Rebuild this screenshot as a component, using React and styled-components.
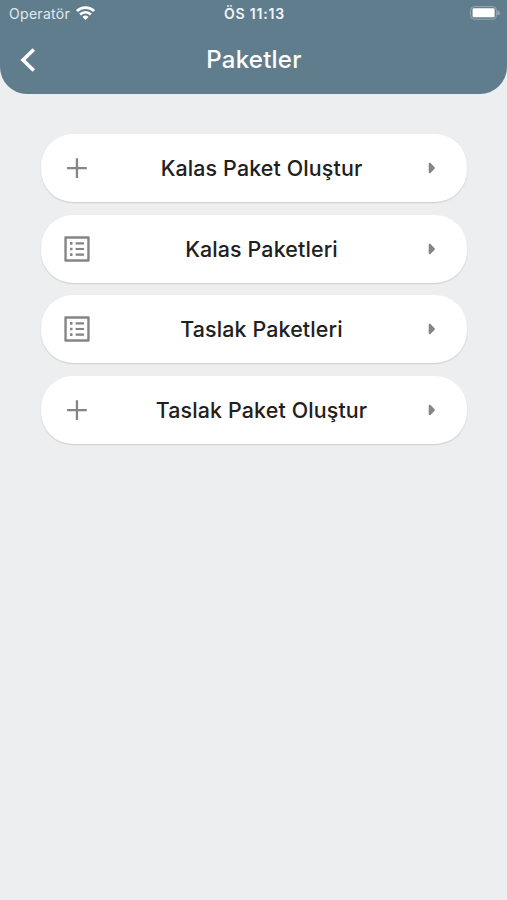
import React from "react";
import styled, { createGlobalStyle } from "styled-components";

const items = [
    { title: "Kalas Paket Oluştur", icon: "add" },
    { title: "Kalas Paketleri", icon: "list" },
    { title: "Taslak Paketleri", icon: "list" },
    { title: "Taslak Paket Oluştur", icon: "add" },
];

// Icons
const WifiIcon = () => (
    <svg width="19" height="15" viewBox="0 0 19 15" fill="none">
        <path d="M1 5.1C5.4.5 13.6.5 18 5.1" stroke="#fff" strokeWidth="2.8" />
        <path d="M4.1 8.5c2.9-3 7.9-3 10.8 0" stroke="#fff" strokeWidth="2.6" />
        <path d="M6.5 10.9a4.1 4.1 0 0 1 6 0l-3 3z" fill="#fff" />
    </svg>
);

const BatteryIcon = () => (
    <svg width="31" height="14" viewBox="0 0 31 14" fill="none">
        <rect x="0.6" y="0.6" width="25.8" height="12.6" rx="3.6" stroke="#95a9b4" />
        <rect x="2.6" y="2.3" width="22" height="9" rx="1.2" fill="#fff" />
        <path d="M27.4 4.3C29 5 30 6 30 6.9s-1 2-2.6 2.6z" fill="#95a9b4" />
    </svg>
);

const BackIcon = () => (
    <svg width="16" height="24" viewBox="0 0 16 24" fill="none">
        <path d="M13.8 1.4 3 12l10.8 10.6" stroke="#fff" strokeWidth="3.5" />
    </svg>
);

const AddIcon = () => (
    <svg width="26" height="26" viewBox="0 0 26 26">
        <path d="M11.8 3.2h2.3v8.7h8.7v2.3h-8.7v8.7h-2.3v-8.7H3.1v-2.3h8.7z" />
    </svg>
);

const ListIcon = () => (
    <svg width="26" height="26" viewBox="2.75 2.75 18.5 18.5">
        <path d="M19.3 4.7v14.6H4.7V4.7h14.6m.8-1.7H3.9c-.5 0-.9.4-.9.9v16.2c0 .4.4.9.9.9h16.2c.4 0 .9-.5.9-.9V3.9c0-.5-.5-.9-.9-.9zM11 7.2h6v1.6h-6zm0 4h6v1.6h-6zm0 4h6v1.6h-6zM7 7.1h1.8v1.8H7zm0 4h1.8v1.8H7zm0 4h1.8v1.8H7z" />
    </svg>
);

const ArrowIcon = () => (
    <svg width="8" height="12" viewBox="0 0 8 12">
        <path d="M.7 1.9v8.2c0 1 1.1 1.4 1.8.8l4.1-4.1c.5-.5.5-1.1 0-1.6L2.5 1.1C1.8.5.7.9.7 1.9z" />
    </svg>
);

const App = () => {
    return (
        <>
            <GlobalStyle />
            <Screen>
                <Header>
                    <StatusBar>
                        <Carrier>
                            <span>Operatör</span>
                            <WifiIcon />
                        </Carrier>
                        <Clock>ÖS 11:13</Clock>
                        <Battery>
                            <BatteryIcon />
                        </Battery>
                    </StatusBar>
                    <NavBar>
                        <BackButton aria-label="Geri">
                            <BackIcon />
                        </BackButton>
                        <Title>Paketler</Title>
                    </NavBar>
                </Header>

                <Menu>
                    {items.map(({ title, icon }) => (
                        <MenuItem key={title}>
                            {icon === "add" ? <AddIcon /> : <ListIcon />}
                            <Label>{title}</Label>
                            <ArrowIcon />
                        </MenuItem>
                    ))}
                </Menu>
            </Screen>
        </>
    );
};

const GlobalStyle = createGlobalStyle`
    * {
        box-sizing: border-box;
        margin: 0;
        padding: 0;
    }

    body {
        background: #eceef0;
        font-family: Inter, "Liberation Sans", sans-serif;
        -webkit-font-smoothing: antialiased;
    }

    svg {
        display: block;
        flex-shrink: 0;
    }
`;

const Screen = styled.div`
    min-height: 100vh;
    background: #eceef0;
`;

const Header = styled.header`
    height: 93.6px;
    border-radius: 0 0 27px 27px;
    background: #607d8d;
    color: white;
`;

const StatusBar = styled.div`
    height: 27px;
    padding: 0 6px 0 9px;
    display: grid;
    grid-template-columns: 1fr auto 1fr;
    align-items: center;
`;

const Carrier = styled.div`
    display: flex;
    align-items: center;
    gap: 6px;
    font-size: 14px;
    letter-spacing: 0.3px;
    color: #e3e9ec;
`;

const Clock = styled.div`
    padding-right: 1px;
    font-size: 14px;
    font-weight: 600;
    letter-spacing: 0.8px;
    color: #f1f5f7;
`;

const Battery = styled.div`
    justify-self: end;
    padding-bottom: 1px;
`;

const NavBar = styled.div`
    height: 66px;
    padding: 0 19px;
    display: grid;
    grid-template-columns: 40px 1fr 40px;
    align-items: center;
`;

const BackButton = styled.button`
    padding-left: 1px;
    border: none;
    background: none;
`;

const Title = styled.h1`
    padding-left: 1px;
    font-size: 24px;
    font-weight: 500;
    line-height: 30px;
    letter-spacing: 0.25px;
    text-align: center;
`;

const Menu = styled.nav`
    padding: 40.4px 40px 0 41px;
    display: flex;
    flex-direction: column;
    gap: 12.6px;
`;

const MenuItem = styled.button`
    height: 68px;
    padding: 0 31.5px 0 23px;
    display: flex;
    align-items: center;
    border: none;
    border-radius: 32px;
    background: white;
    box-shadow: 0 1px 1.5px rgba(0, 0, 0, 0.14);
    font-family: inherit;

    svg {
        fill: #858585;
    }
`;

const Label = styled.span`
    flex: 1;
    padding-left: 5.5px;
    color: #202020;
    font-size: 21.4px;
    font-weight: 500;
    line-height: 28px;
    letter-spacing: 0.14px;
    text-align: center;
`;

export default App;
